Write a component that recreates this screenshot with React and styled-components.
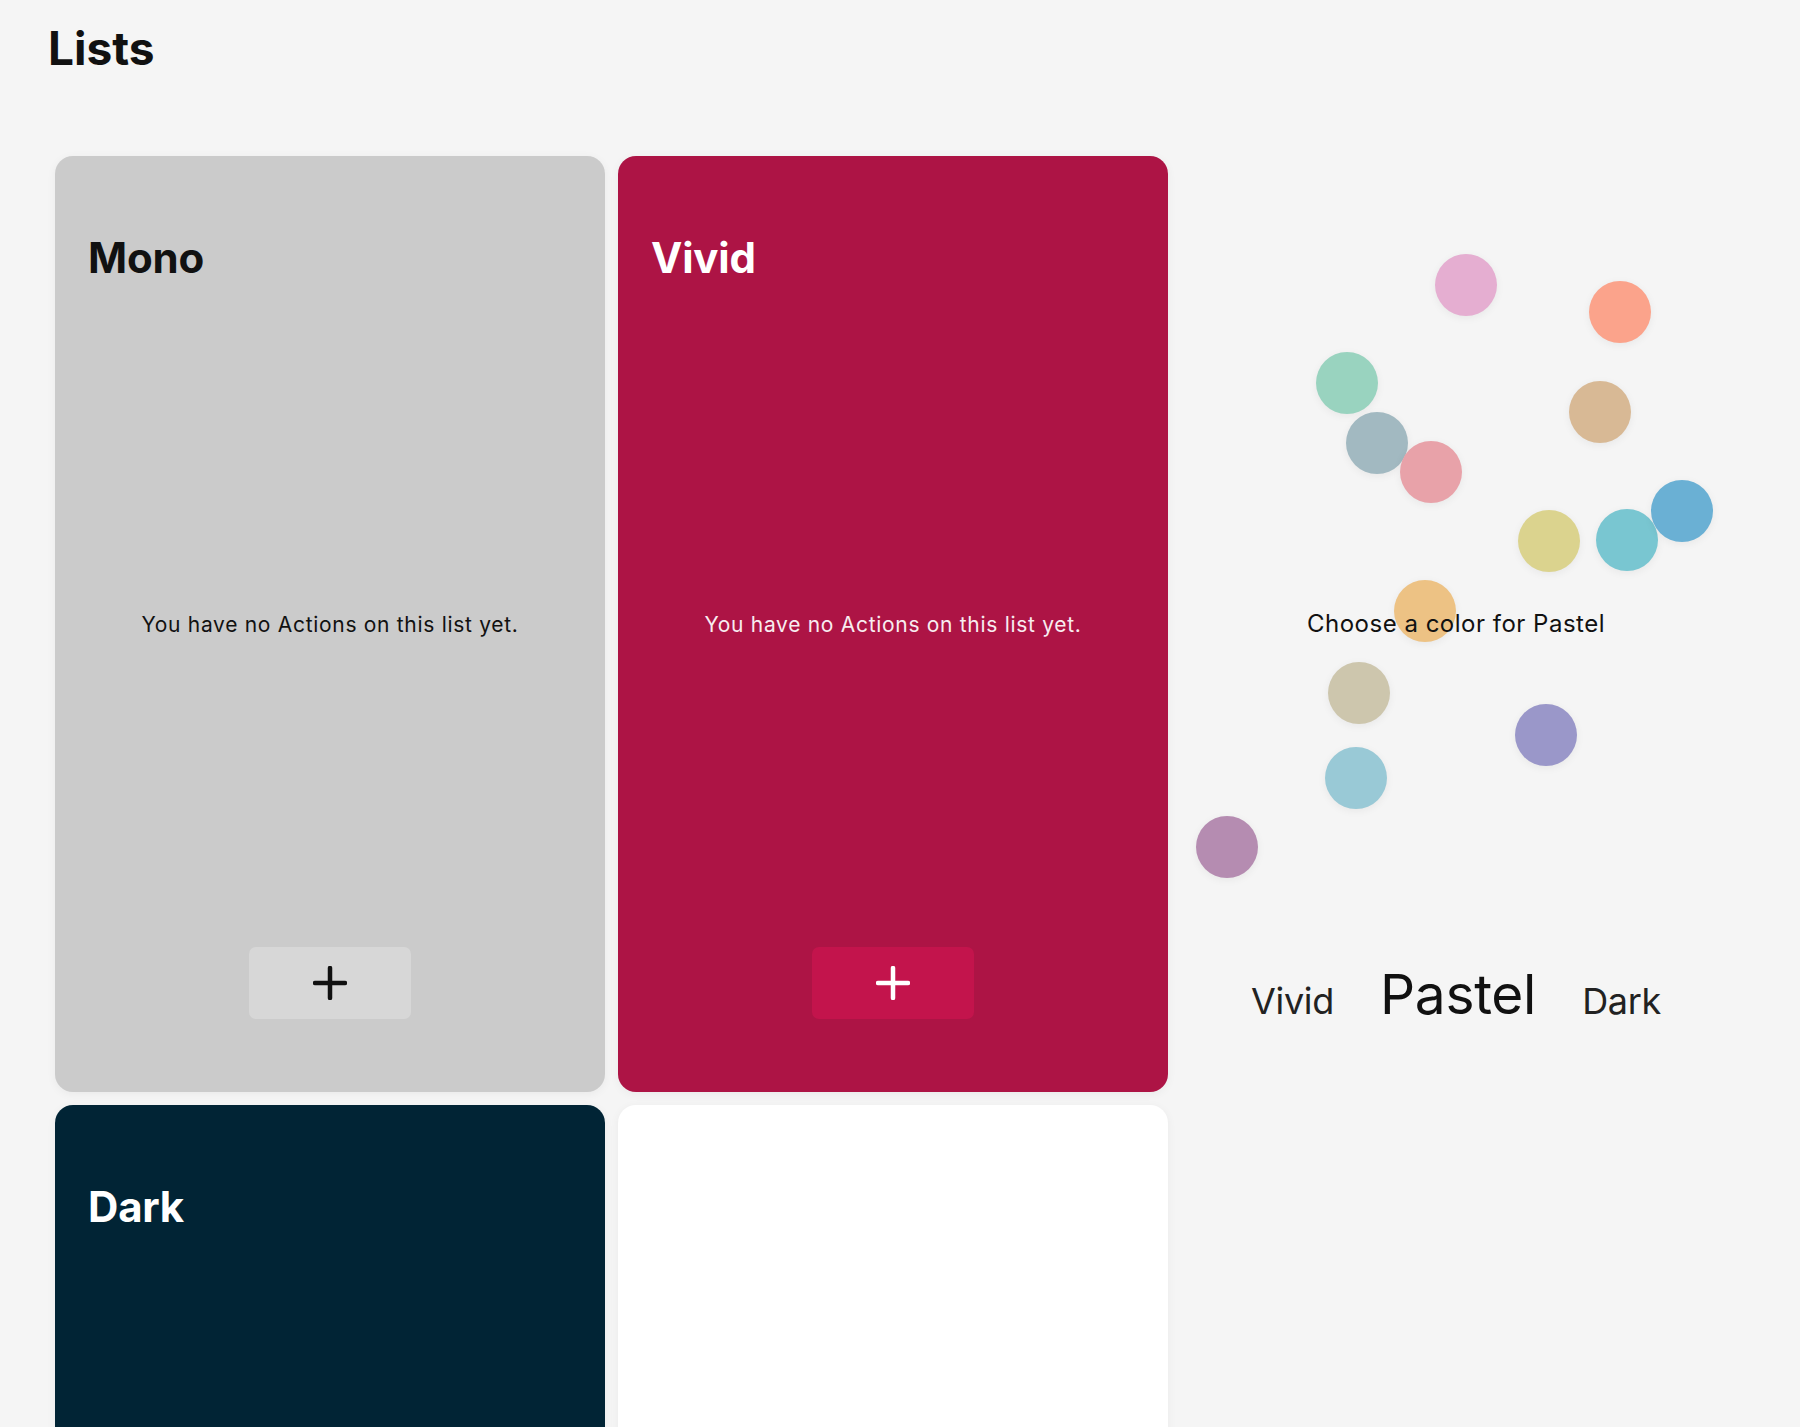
import React from "react";
import styled, { createGlobalStyle } from "styled-components";

const GlobalStyle = createGlobalStyle`
  html, body {
    margin: 0;
    padding: 0;
    background: #f5f5f5;
    font-family: Inter, "Noto Sans", sans-serif;
    color: #111;
  }
`;

const Page = styled.div`
  padding: 21px 0 60px;
`;

const Title = styled.h1`
  margin: 0 0 80px 48px;
  font-size: 46px;
  line-height: 1.2;
  font-weight: 700;
  letter-spacing: 0;
`;

const Grid = styled.div`
  display: grid;
  grid-template-columns: repeat(3, 550px);
  grid-auto-rows: 936px;
  gap: 13px;
  padding-left: 55px;
`;

const Card = styled.section`
  display: flex;
  flex-direction: column;
  align-items: center;
  padding: 77px 33px 73px;
  border-radius: 18px;
  background: ${(p) => p.$bg};
  color: ${(p) => p.$fg};
  box-shadow: 0 2px 10px rgba(0, 0, 0, 0.05);
  box-sizing: border-box;
`;

const CardTitle = styled.h2`
  align-self: stretch;
  margin: 0 0 18px;
  font-size: 42px;
  line-height: 1.2;
  font-weight: 700;
  letter-spacing: -0.2px;
`;

const Empty = styled.div`
  flex: 1;
  display: flex;
  align-items: center;
  justify-content: center;
  font-size: 21px;
  letter-spacing: 0.7px;
  opacity: ${(p) => (p.$light ? 0.92 : 1)};
`;

const AddButton = styled.button`
  width: 162px;
  height: 72px;
  border: none;
  border-radius: 7px;
  background: ${(p) => p.$bg};
  color: inherit;
  display: flex;
  align-items: center;
  justify-content: center;
  cursor: pointer;
`;

const Picker = styled.section`
  position: relative;
  display: grid;
  grid-template-rows: 1fr auto 1fr;
  justify-items: center;
`;

const Dot = styled.span`
  position: absolute;
  width: 62px;
  height: 62px;
  border-radius: 50%;
  background: ${(p) => p.$color};
  box-shadow: 0 2px 8px rgba(0, 0, 0, 0.06);
`;

const Prompt = styled.p`
  grid-row: 2;
  position: relative;
  z-index: 1;
  margin: 0;
  font-size: 24px;
  line-height: 1.2;
  letter-spacing: 0.5px;
`;

const Tabs = styled.div`
  grid-row: 3;
  display: flex;
  align-items: baseline;
  gap: 46px;
  padding-top: 322px;
`;

const Tab = styled.span`
  font-size: ${(p) => (p.$active ? "55px" : "36px")};
  line-height: 1.2;
  color: ${(p) => (p.$active ? "#111" : "#222")};
  letter-spacing: -0.3px;
`;

const Plus = ({ color }) => (
  <svg width="34" height="34" viewBox="0 0 34 34">
    <path
      d="M17 2v30M2 17h30"
      stroke={color}
      strokeWidth="4.5"
      strokeLinecap="round"
    />
  </svg>
);

const dots = [
  { x: 254, y: 98, c: "#e5aed1" },
  { x: 408, y: 125, c: "#fba38b" },
  { x: 135, y: 196, c: "#99d3bf" },
  { x: 388, y: 225, c: "#d8b995" },
  { x: 165, y: 256, c: "#a2b9c1" },
  { x: 219, y: 285, c: "#e8a2a9" },
  { x: 337, y: 354, c: "#dbd38e" },
  { x: 415, y: 353, c: "#79c6d1" },
  { x: 470, y: 324, c: "#6ab0d4" },
  { x: 213, y: 424, c: "#edc284" },
  { x: 147, y: 506, c: "#cdc6ad" },
  { x: 334, y: 548, c: "#9a97c9" },
  { x: 144, y: 591, c: "#99c9d6" },
  { x: 15, y: 660, c: "#b58cb1" },
];

function ListCard({ name, bg, fg, button, light }) {
  return (
    <Card $bg={bg} $fg={fg}>
      <CardTitle>{name}</CardTitle>
      <Empty $light={light}>You have no Actions on this list yet.</Empty>
      <AddButton $bg={button}>
        <Plus color={fg} />
      </AddButton>
    </Card>
  );
}

export default function App() {
  return (
    <>
      <GlobalStyle />
      <Page>
        <Title>Lists</Title>
        <Grid>
          <ListCard name="Mono" bg="#cbcbcb" fg="#111" button="#d7d7d7" />
          <ListCard
            name="Vivid"
            bg="#ad1445"
            fg="#fff"
            button="#c3144c"
            light
          />
          <Picker>
            {dots.map((d, i) => (
              <Dot
                key={i}
                $color={d.c}
                style={{ left: d.x, top: d.y }}
              />
            ))}
            <Prompt>Choose a color for Pastel</Prompt>
            <Tabs>
              <Tab>Vivid</Tab>
              <Tab $active>Pastel</Tab>
              <Tab>Dark</Tab>
            </Tabs>
          </Picker>
          <ListCard name="Dark" bg="#012435" fg="#fff" button="#0b3347" light />
          <Card $bg="#fff" $fg="#111" />
        </Grid>
      </Page>
    </>
  );
}
